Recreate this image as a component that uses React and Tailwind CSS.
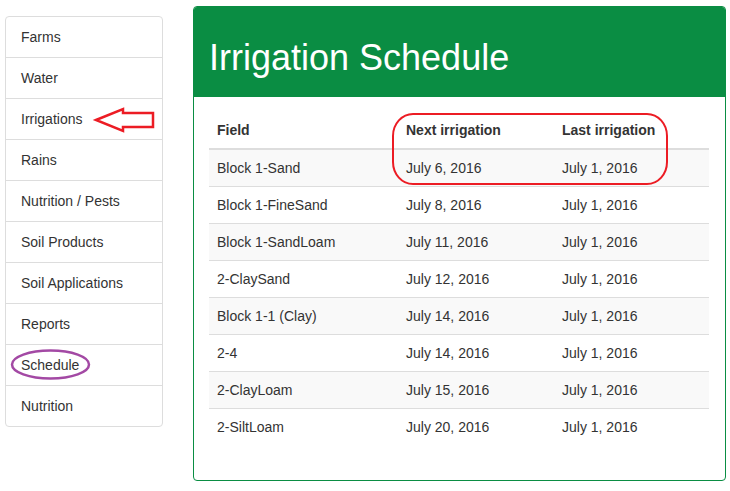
const menu = [
    "Farms",
    "Water",
    "Irrigations",
    "Rains",
    "Nutrition / Pests",
    "Soil Products",
    "Soil Applications",
    "Reports",
    "Schedule",
    "Nutrition"
];

const rows = [
    ["Block 1-Sand", "July 6, 2016", "July 1, 2016"],
    ["Block 1-FineSand", "July 8, 2016", "July 1, 2016"],
    ["Block 1-SandLoam", "July 11, 2016", "July 1, 2016"],
    ["2-ClaySand", "July 12, 2016", "July 1, 2016"],
    ["Block 1-1 (Clay)", "July 14, 2016", "July 1, 2016"],
    ["2-4", "July 14, 2016", "July 1, 2016"],
    ["2-ClayLoam", "July 15, 2016", "July 1, 2016"],
    ["2-SiltLoam", "July 20, 2016", "July 1, 2016"]
];

export default function App() {

    return (

        <div
            className="relative w-[730px] h-[491px] bg-white text-[14px] text-[#333]"
            style={{ fontFamily: '"Liberation Sans", Arial, sans-serif' }}
        >

            <div className="flex items-start">

                {/* sidebar */}
                <div className="ml-[5px] mt-[16px] w-[158px] border border-[#ddd] rounded-[4px]">

                    {menu.map((item, i) => (

                        <div
                            key={item}
                            className={
                                i === 0
                                    ? "h-[40px] px-[15px] flex items-center"
                                    : "h-[41px] px-[15px] flex items-center border-t border-[#ddd]"
                            }
                        >
                            {item}
                        </div>

                    ))}

                </div>

                {/* panel */}
                <div className="ml-[30px] mt-[6px] w-[533px] h-[475px] border border-[#0a8d43] rounded-[4px] overflow-hidden">

                    <div className="h-[90px] bg-[#0a8d43] px-[15px] pt-[31px]">

                        <h1 className="text-[36px] leading-[40px] text-white">
                            Irrigation Schedule
                        </h1>

                    </div>

                    <div className="p-[15px]">

                        <table className="w-[500px] border-collapse">

                            <thead>

                                <tr className="border-b-2 border-[#ddd]">

                                    <th className="text-left font-bold px-[8px] py-[8px] leading-[20px] w-[189px]">
                                        Field
                                    </th>

                                    <th className="text-left font-bold px-[8px] py-[8px] leading-[20px] w-[156px]">
                                        Next irrigation
                                    </th>

                                    <th className="text-left font-bold px-[8px] py-[8px] leading-[20px]">
                                        Last irrigation
                                    </th>

                                </tr>

                            </thead>

                            <tbody>

                                {rows.map((r, i) => (

                                    <tr
                                        key={r[0]}
                                        className={
                                            i % 2 === 0
                                                ? "bg-[#f9f9f9] border-t border-[#ddd]"
                                                : "border-t border-[#ddd]"
                                        }
                                    >

                                        <td className="px-[8px] py-[8px] leading-[20px]">{r[0]}</td>
                                        <td className="px-[8px] py-[8px] leading-[20px]">{r[1]}</td>
                                        <td className="px-[8px] py-[8px] leading-[20px]">{r[2]}</td>

                                    </tr>

                                ))}

                            </tbody>

                        </table>

                    </div>

                </div>

            </div>

            {/* annotations drawn over the screenshot */}
            <svg
                className="absolute left-0 top-0 pointer-events-none"
                width="730"
                height="491"
            >

                <polygon
                    points="96,120 123,109 123,113 153,113 153,127 123,127 123,131"
                    fill="none"
                    stroke="#ec1c24"
                    strokeWidth="2.5"
                    strokeLinejoin="miter"
                />

                <rect
                    x="393"
                    y="114"
                    width="274"
                    height="70"
                    rx="20"
                    ry="22"
                    fill="none"
                    stroke="#ec1c24"
                    strokeWidth="2"
                />

                <ellipse
                    cx="50.5"
                    cy="364.5"
                    rx="38.5"
                    ry="14"
                    fill="none"
                    stroke="#a349a4"
                    strokeWidth="2.5"
                />

            </svg>

        </div>

    );

}
